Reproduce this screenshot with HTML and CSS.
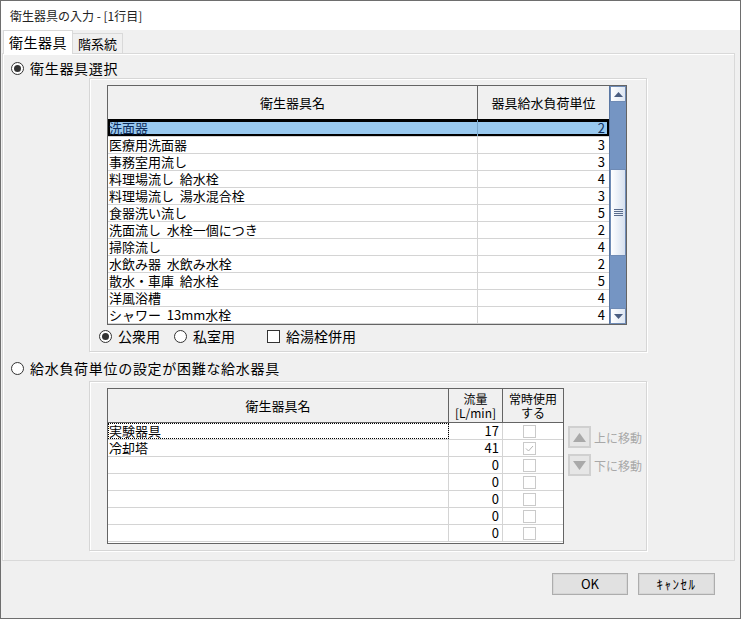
FILE: index.html
```html
<!DOCTYPE html>
<html lang="ja">
<head>
    <meta charset="UTF-8">
    <title>衛生器具の入力</title>
    <link rel="stylesheet" href="styles.css">
</head>
<body>
<div class="window">
    <div class="titlebar">衛生器具の入力 - [1行目]</div>

    <div class="tabs">
        <div class="tab active">衛生器具</div>
        <div class="tab">階系統</div>
    </div>

    <div class="panel">
        <div class="radio-row">
            <span class="radio checked"></span>
            <span class="label">衛生器具選択</span>
        </div>

        <div class="group group-select">
            <div class="grid1">
                <div class="grid1-main">
                    <div class="g1-head">
                        <div class="hcell">衛生器具名</div>
                        <div class="hcell">器具給水負荷単位</div>
                    </div>
                    <div class="g1-row selected"><div class="c-name">洗面器</div><div class="c-num">2</div></div>
                    <div class="g1-row"><div class="c-name">医療用洗面器</div><div class="c-num">3</div></div>
                    <div class="g1-row"><div class="c-name">事務室用流し</div><div class="c-num">3</div></div>
                    <div class="g1-row"><div class="c-name">料理場流し&nbsp; 給水栓</div><div class="c-num">4</div></div>
                    <div class="g1-row"><div class="c-name">料理場流し&nbsp; 湯水混合栓</div><div class="c-num">3</div></div>
                    <div class="g1-row"><div class="c-name">食器洗い流し</div><div class="c-num">5</div></div>
                    <div class="g1-row"><div class="c-name">洗面流し&nbsp; 水栓一個につき</div><div class="c-num">2</div></div>
                    <div class="g1-row"><div class="c-name">掃除流し</div><div class="c-num">4</div></div>
                    <div class="g1-row"><div class="c-name">水飲み器&nbsp; 水飲み水栓</div><div class="c-num">2</div></div>
                    <div class="g1-row"><div class="c-name">散水・車庫&nbsp; 給水栓</div><div class="c-num">5</div></div>
                    <div class="g1-row"><div class="c-name">洋風浴槽</div><div class="c-num">4</div></div>
                    <div class="g1-row"><div class="c-name">シャワー&nbsp; 13mm水栓</div><div class="c-num">4</div></div>
                </div>
                <div class="vscroll">
                    <div class="sb-btn">
                        <svg width="9" height="5" viewBox="0 0 9 5"><path d="M0 5 L4.5 0 L9 5 Z" fill="#4a5d80"/></svg>
                    </div>
                    <div class="sb-track" style="height: 67px"></div>
                    <div class="sb-thumb">
                        <svg width="9" height="7" viewBox="0 0 9 7"><path d="M0 0.5H9M0 2.5H9M0 4.5H9M0 6.5H9" stroke="#5a6c8c" stroke-width="1"/></svg>
                    </div>
                    <div class="sb-track" style="height: 52px"></div>
                    <div class="sb-btn">
                        <svg width="9" height="5" viewBox="0 0 9 5"><path d="M0 0 L4.5 5 L9 0 Z" fill="#4a5d80"/></svg>
                    </div>
                </div>
            </div>

            <div class="options">
                <span class="radio checked"></span><span class="opt-label">公衆用</span>
                <span class="radio"></span><span class="opt-label wide">私室用</span>
                <span class="checkbox"></span><span class="opt-label">給湯栓併用</span>
            </div>
        </div>

        <div class="radio-row second">
            <span class="radio"></span>
            <span class="label">給水負荷単位の設定が困難な給水器具</span>
        </div>

        <div class="group group-hard">
            <div class="grid2">
                <div class="g2-head">
                    <div class="hcell">衛生器具名</div>
                    <div class="hcell two">流量<br>[L/min]</div>
                    <div class="hcell two">常時使用<br>する</div>
                </div>
                <div class="g2-row"><div class="c-name focus">実験器具</div><div class="c-num">17</div><div class="c-chk"><span class="mini-chk"></span></div></div>
                <div class="g2-row"><div class="c-name">冷却塔</div><div class="c-num">41</div><div class="c-chk"><span class="mini-chk on"><svg width="11" height="11" viewBox="0 0 11 11"><path d="M2 5.5 L4.5 8 L9 3" fill="none" stroke="#b4b4b4" stroke-width="1"/></svg></span></div></div>
                <div class="g2-row"><div class="c-name"></div><div class="c-num">0</div><div class="c-chk"><span class="mini-chk"></span></div></div>
                <div class="g2-row"><div class="c-name"></div><div class="c-num">0</div><div class="c-chk"><span class="mini-chk"></span></div></div>
                <div class="g2-row"><div class="c-name"></div><div class="c-num">0</div><div class="c-chk"><span class="mini-chk"></span></div></div>
                <div class="g2-row"><div class="c-name"></div><div class="c-num">0</div><div class="c-chk"><span class="mini-chk"></span></div></div>
                <div class="g2-row"><div class="c-name"></div><div class="c-num">0</div><div class="c-chk"><span class="mini-chk"></span></div></div>
            </div>

            <div class="move-btns">
                <div class="move">
                    <span class="move-icon"><svg width="13" height="9" viewBox="0 0 13 9"><path d="M0 9 L6.5 0 L13 9 Z" fill="#a9a9a9"/></svg></span>
                    <span class="move-text">上に移動</span>
                </div>
                <div class="move">
                    <span class="move-icon"><svg width="13" height="9" viewBox="0 0 13 9"><path d="M0 0 L6.5 9 L13 0 Z" fill="#a9a9a9"/></svg></span>
                    <span class="move-text">下に移動</span>
                </div>
            </div>
        </div>
    </div>

    <div class="footer">
        <button class="btn">OK</button>
        <button class="btn cancel">ｷｬﾝｾﾙ</button>
    </div>
</div>
</body>
</html>
```

FILE: styles.css
```css
* {
    box-sizing: border-box;
}

body {
    margin: 0;
    font-family: "Noto Sans CJK JP", "Noto Sans", sans-serif;
    font-size: 13px;
    color: #000;
    background: #fff;
}

.window {
    width: 741px;
    height: 619px;
    border: 1px solid #6e6e6e;
    background: #f0f0f0;
    display: flex;
    flex-direction: column;
}

.titlebar {
    height: 29px;
    line-height: 29px;
    padding-left: 9px;
    background: #fff;
    font-size: 12px;
    color: #222;
}

/* tabs */
.tabs {
    height: 23px;
    display: flex;
    align-items: flex-end;
    padding-left: 2px;
}

.tab {
    height: 20px;
    width: 50px;
    line-height: 20px;
    text-align: center;
    font-size: 13px;
    border: 1px solid #d9d9d9;
    border-bottom: none;
    border-left: none;
}

.tab.active {
    width: 70px;
    height: 24px;
    line-height: 22px;
    background: #fff;
    border-left: 1px solid #d9d9d9;
    margin-bottom: -1px;
    position: relative;
    z-index: 1;
    font-size: 14px;
    letter-spacing: 0.5px;
}

.panel {
    height: 508px;
    margin: 0 5px 0 1px;
    border: 1px solid #d9d9d9;
    box-shadow: inset 1px 1px 0 #fff;
    padding-top: 5px;
}

.radio-row {
    height: 18px;
    display: flex;
    align-items: center;
    padding-left: 8px;
}

.radio-row .label {
    margin-left: 6px;
    font-size: 14px;
    letter-spacing: 0.7px;
    line-height: 18px;
}

.radio-row.second {
    margin-top: 7px;
}

.radio {
    width: 13px;
    height: 13px;
    border: 1px solid #333;
    border-radius: 50%;
    background: #fff;
    display: inline-flex;
    align-items: center;
    justify-content: center;
    flex: none;
}

.radio.checked::after {
    content: "";
    width: 7px;
    height: 7px;
    border-radius: 50%;
    background: #333;
}

.checkbox {
    width: 13px;
    height: 13px;
    border: 1px solid #333;
    background: #fff;
    flex: none;
}

.group {
    margin-left: 86px;
    width: 558px;
    border: 1px solid #d6d6d6;
    box-shadow: inset 1px 1px 0 #fff, 1px 1px 0 #fff;
}

.group-select {
    margin-top: 1px;
    height: 274px;
    padding: 6px 0 0 17px;
}

.group-hard {
    margin-top: 4px;
    height: 170px;
    padding: 6px 0 0 17px;
    display: flex;
}

/* upper grid */
.grid1 {
    width: 520px;
    height: 240px;
    border: 1px solid #646464;
    background: #fff;
    display: flex;
}

.grid1-main {
    width: 501px;
}

.g1-head {
    height: 34px;
    display: grid;
    grid-template-columns: 370px 131px;
    background: #f0f0f0;
    border-bottom: 1px solid #646464;
}

.hcell {
    display: flex;
    align-items: center;
    justify-content: center;
    text-align: center;
    border-right: 1px solid #646464;
    font-size: 13px;
    line-height: 14px;
}

.hcell:last-child {
    border-right: none;
}

.g1-row {
    height: 17px;
    display: grid;
    grid-template-columns: 370px 131px;
    border-bottom: 1px solid #d4d4d4;
    line-height: 16px;
}

.c-name {
    padding-left: 1px;
    border-right: 1px solid #d4d4d4;
    white-space: nowrap;
}

.c-num {
    text-align: right;
    padding-right: 4px;
    border-right: 1px solid #d4d4d4;
}

.g1-row .c-num {
    border-right: none;
}

.g1-row.selected {
    background: #99c9ef;
    color: #0c2c5a;
    box-shadow: 0 -1px 0 #000, inset 0 0 0 2px #000;
    position: relative;
}

.g1-row.selected .c-name,
.g1-row.selected .c-num {
    border-right-color: #7aa8cc;
}

/* scrollbar */
.vscroll {
    width: 17px;
    display: flex;
    flex-direction: column;
    background: #7595c3;
    border-left: 1px solid #5a77a3;
}

.sb-btn {
    height: 16px;
    display: flex;
    align-items: center;
    justify-content: center;
    background: linear-gradient(to right, #ffffff, #dde6f3);
    border: 1px solid #6f8bb5;
}

.sb-thumb {
    height: 87px;
    display: flex;
    align-items: center;
    justify-content: center;
    background: linear-gradient(to right, #ffffff, #d6e0ef);
    border: 1px solid #6f8bb5;
}

/* options under grid */
.options {
    margin: 3px 0 0 -8px;
    height: 17px;
    display: flex;
    align-items: center;
}

.opt-label {
    font-size: 14px;
    margin: 0 14px 0 6px;
    line-height: 17px;
}

.opt-label.wide {
    margin-right: 32px;
}

/* lower grid */
.grid2 {
    width: 457px;
    height: 156px;
    border: 1px solid #646464;
    background: #fff;
}

.g2-head {
    height: 34px;
    display: grid;
    grid-template-columns: 341px 54px 60px;
    background: #f0f0f0;
    border-bottom: 1px solid #646464;
}

.hcell.two {
    line-height: 14px;
    font-size: 12px;
}

.g2-row {
    height: 17px;
    display: grid;
    grid-template-columns: 341px 54px 60px;
    border-bottom: 1px solid #d4d4d4;
    line-height: 16px;
}

.g2-row .c-num {
    padding-right: 3px;
}

.c-name.focus {
    outline: 1px dotted #000;
    outline-offset: -1px;
}

.c-chk {
    display: flex;
    align-items: center;
    padding-left: 20px;
}

.mini-chk {
    width: 13px;
    height: 13px;
    border: 1px solid #cacaca;
    background: #fff;
    display: flex;
}

.move-btns {
    margin: 38px 0 0 4px;
    display: flex;
    flex-direction: column;
    gap: 6px;
}

.move {
    display: flex;
    align-items: center;
    height: 22px;
}

.move-icon {
    width: 23px;
    height: 22px;
    border: 2px solid #d0d0d0;
    background: #e6e6e6;
    display: flex;
    align-items: center;
    justify-content: center;
}

.move-text {
    margin-left: 3px;
    font-size: 12px;
    color: #a8a8a8;
}

/* footer */
.footer {
    display: flex;
    justify-content: flex-end;
    gap: 10px;
    padding: 12px 25px 0 0;
}

.btn {
    width: 76px;
    height: 22px;
    font-family: inherit;
    font-size: 13px;
    background: #e1e1e1;
    border: 1px solid #adadad;
    box-shadow: inset 0 0 0 1px #d6d6d6;
    padding: 0;
    line-height: 18px;
    color: #000;
}

.btn.cancel {
    width: 77px;
    letter-spacing: 1.5px;
    font-weight: normal;
}
```
